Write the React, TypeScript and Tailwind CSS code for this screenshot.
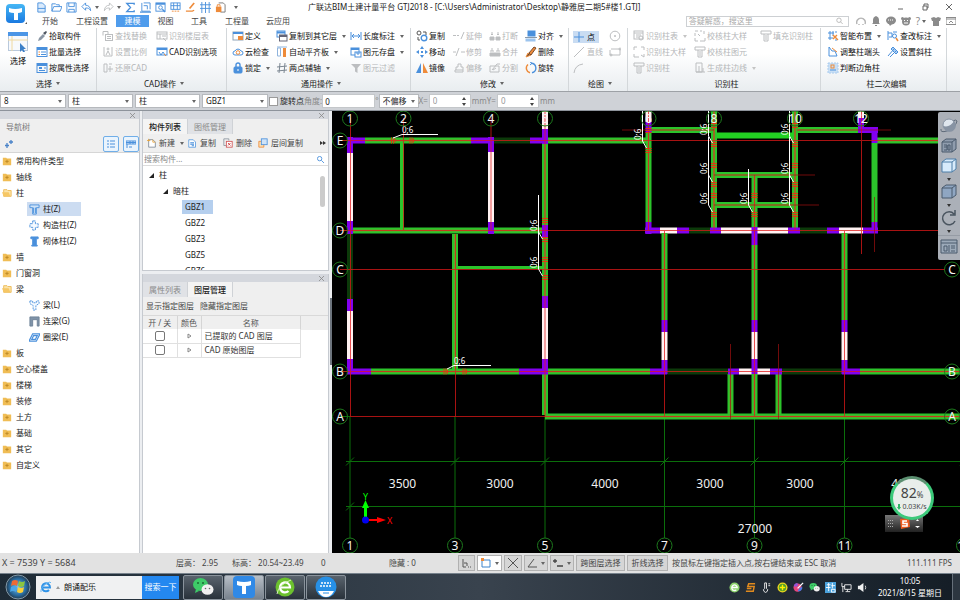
import { useState } from 'react';
import type { ReactNode } from 'react';

type Draw = (accent: string) => ReactNode;

// 12x12 glyphs. Main strokes use currentColor, the second colour is passed in.
const ICONS: Record<string, Draw> = {
  pick: () => <><path d="M2 11l1-3 4-4 2 2-4 4z" fill="#8b97a5" stroke="none" /><path d="M7 3l3-2 1 1-2 3z" fill="#4d5660" stroke="none" /></>,
  batch: a => <><rect x="1" y="1.5" width="10" height="9" /><path d="M1 3h10" strokeWidth="2" /><path d="M5 6h5M5 8.5h5" /><path d="M2.5 6h1.5M2.5 8.5h1.5" stroke={a} /></>,
  attr: () => <><rect x="1" y="1.5" width="10" height="9" /><path d="M1 3h10M3 6h3" strokeWidth="2" /><path d="M3 8.5h6M8 6h2" /></>,
  find: () => <><rect x="3.5" y="4.5" width="7" height="6" /><path d="M1 1.5h5v3M5 6.5h4M5 8.5h4M1 1.5v4" /></>,
  ratio: () => <><path d="M2 3v7h8V3M1 2h2M9 2h2M4 9l2-4 2 4" /><circle cx="6" cy="3" r="1" /></>,
  restore: () => <><path d="M2 2h3v8H2zM7 2h3M8 4v6M6 7h5" /></>,
  floor: () => <><rect x="1" y="2" width="10" height="7" /><path d="M1 4h10M4 4v5M6 6h4M7 8l3 3" /></>,
  cad: a => <><rect x="1" y="2" width="10" height="7" /><path d="M1 3h10" strokeWidth="2" /><path d="M3 6l2 3 2-3 2 3" /><path d="M8 8l2 2" stroke={a} /></>,
  define: a => <><rect x="1" y="2" width="10" height="8" stroke="#8fa3b8" /><path d="M1 3h10" strokeWidth="2" /><path d="M6 6h5v4H6z" fill={a} stroke="none" /></>,
  cloud: a => <><path d="M3 9h6a2 2 0 0 0 0-4 3.3 3.3 0 0 0-6 0 2 2 0 0 0 0 4z" /><circle cx="6" cy="6.5" r="1.8" stroke={a} /></>,
  lock: () => <><rect x="2" y="5" width="8" height="6" rx="1" fill="currentColor" /><path d="M4 5V3a2 2 0 0 1 4 0v2" strokeWidth="1.4" /><path d="M6 7v2" stroke="#fff" /></>,
  layers: () => <><rect x="1" y="1" width="8" height="6" /><path d="M1 2.5h8" strokeWidth="2" /><rect x="3.5" y="5" width="7.5" height="6" fill="#fff" stroke="#667" /><path d="M3.5 6h7.5" stroke="#667" strokeWidth="2" /></>,
  align: a => <><path d="M1.5 2h3v8h-3zM1 1h10" stroke="#8fb4dd" /><path d="M7 2h3v9H7z" fill={a} stroke="none" /></>,
  aux: () => <path d="M4 1L3 11M9 1L8 11M1 5l10-1M1 9l10-1" stroke="#7c8792" />,
  length: () => <path d="M1 2v8M11 2v8M2 6h8M4 4L2 6l2 2M8 4l2 2-2 2" />,
  save2: () => <><rect x="1" y="2" width="8" height="7" /><path d="M1 3h8" strokeWidth="2" /><rect x="5" y="6" width="6" height="5" fill="#fff" /><path d="M7 6v2h2V6" /></>,
  filter: () => <path d="M1 2h10L7.5 6v5L5 9.5V6z" fill="currentColor" stroke="none" />,
  copy: () => <><circle cx="3" cy="3" r="2" stroke="#555" /><circle cx="8" cy="8" r="2.8" strokeWidth="1.4" /><path d="M7 2h3v3M2 7v3h2" stroke="#555" /></>,
  move: () => <path d="M6 0l2 3H4zM6 12l2-3H4zM0 6l3-2v4zM12 6L9 4v4zM5 5h2v2H5z" fill="currentColor" stroke="none" />,
  mirror: a => <><path d="M5 1v10H0z" fill="currentColor" stroke="none" /><path d="M7 1v10h5z" fill={a} stroke="none" /></>,
  extend: () => <path d="M0 5.5h3M4 5.5h2M11 2L8 9" />,
  trim: () => <path d="M0 6h3M8 6h4M6 2L3 10" />,
  offset: () => <path d="M2 8h8v2H2zM3 8V5h2V2h3v3h2v3" />,
  brk: () => <><path d="M1 7h4v3H1zM7 7h4v3H7z" fill="currentColor" /><path d="M3 2v3M9 2v3M2 4l1 1 1-1M8 4l1 1 1-1" /></>,
  merge: () => <><path d="M1 7h10v3H1z" fill="currentColor" /><path d="M3 2v3M9 2v3M1 5h4M7 5h4" /></>,
  split: () => <path d="M1 4v6h9V4zM3 8l5-6M4 8l3-2M8 2h3" />,
  snap: () => <><rect x="3" y="1" width="7" height="5" fill="currentColor" /><path d="M0 7.5h12" stroke="#89a" /><rect x="1" y="9" width="9" height="2" fill="#9cc4ee" stroke="#9cc4ee" /></>,
  brush: a => <><path d="M1 11l2-4 3 2z" fill="#6b4a2f" stroke={a} /><path d="M4 7l5-6 2 1-5 7z" fill={a} stroke="#7a4c2c" /></>,
  rotate: a => <><path d="M3 2.5a4.8 4.8 0 0 0 2 8.3" stroke={a} strokeWidth="1.4" /><path d="M6 1.2a4.8 4.8 0 0 1 1 9.5" strokeWidth="1.4" /><path d="M5 0l2 1.3L5 3" /></>,
  point: () => <path d="M6 1v10M1 6h10" />,
  line: () => <path d="M1 11L11 1" />,
  arc: () => <path d="M1 11Q2 3 10 2" />,
  circle: () => <><circle cx="6" cy="6" r="4.8" /><path d="M5 6h2M6 5v2" /></>,
  rect: () => <><path d="M2 3h9v6H1V4" /><circle cx="2" cy="9" r="1" /><circle cx="11" cy="3" r="1" /></>,
  idTable: () => <><rect x="1" y="1" width="9" height="8" /><path d="M1 3h9M3 5h5M3 7h3" /><circle cx="8" cy="8" r="2" /></>,
  idBig: () => <path d="M1 4V1h3M8 1h3v3M11 8v3M1 8v3h5M8 9l3 2" />,
  idCol: () => <path d="M1 1h10v3H8v7H4V4H1zM4 4h4M6 5v5" />,
  check: () => <><path d="M1 1h3M6 1h2M10 1v3M1 3v3M1 8v3h3M6 11h5V8" /><path d="M4 4l2 2" /></>,
  edge: () => <path d="M2 1h6v9H2zM2 10h9M5 4v6M9 6v4" />,
  smart: a => <><path d="M1 3h6M1 8h5M3 1v9M6 1v5M9 1v2M9 9v2" /><path d="M6 5l5 5M10 5l-4 4" stroke={a} strokeWidth="1.4" /></>,
  adjust: a => <><path d="M2 1v9h8L8 5H5z" /><path d="M5 2l5 4" stroke={a} /></>,
  corner: a => <><rect x="1" y="1" width="10" height="10" fill="#c9dff5" stroke="#a9cbee" strokeDasharray="2 1" /><rect x="4" y="3" width="3" height="3" stroke={a} /><path d="M3 8h6" /></>,
  modify: a => <><path d="M1 1v9M1 3h4v4H2M6 2h4" /><circle cx="7.5" cy="6" r="2" /><path d="M9 8l2 3" stroke={a} strokeWidth="1.5" /></>,
  slope: () => <path d="M1 10l6-7M3 11l6-6M6 1l5 5-2 2-5-5z" fill="#a9cdf2" />,
  newFile: () => <><path d="M2 2h5l3 3v6H2z" fill="#fff" stroke="#7b8794" /><path d="M7 2v3h3M2 1v3M0 3h4" stroke="#e8a33a" /></>,
  copyDoc: () => <><path d="M1 1h6l3 3v7H1z" fill="#fff" /><path d="M3 5h5M3 7h5M5 9h3" strokeWidth="1.4" /></>,
  delDoc: () => <><path d="M1 1h6v2M1 1v8h3" stroke="#8a949e" /><rect x="4" y="4" width="7" height="7" fill="#fff" stroke="#d05050" /><path d="M6 6l3 3M9 6L6 9" stroke="#d03030" /></>,
  copyFloor: a => <><path d="M1 4h6v7H1z" stroke={a} fill="#fbe0b5" /><rect x="4" y="1" width="7" height="7" fill="#cfe3f8" /></>,
  folder: () => <><path d="M1 2h4l1 1h5v8H1z" fill="#f0bd55" stroke="none" /><path d="M6 4.5v4M4 6.5h4" stroke="#b98422" /></>,
  folderOpen: () => <><path d="M2 2h4l1 1h4v7H2z" fill="#fbe3a8" stroke="#eab64c" /><path d="M0 5h8l2 5H2z" fill="#f6c765" stroke="none" /></>,
  colZ: () => <path d="M1 1h10v3H8v7H4V4H1zM5 4v6M7 4v6" fill="#cfe3f8" />,
  colG: () => <path d="M4 1h3v3h3v4H7v3H4V8H1V4h3z" fill="#f5faff" strokeDasharray="3 1" />,
  colB: () => <path d="M2 1h8v2H8v7h1v1H3v-1h1V3H2z" fill="currentColor" />,
  beamL: () => <path d="M1 1h3v2h4V1h3v3L7.5 6v5h-3V6L1 4z" fill="#f5faff" strokeDasharray="2 1" />,
  beamG: () => <path d="M1 1h10v10H9V4H4v7H1z" fill="#7f93a8" stroke="#6e8297" />,
  beamE: () => <path d="M4 2h8L8 10H0zM5 4h4L7 8H3z" strokeWidth="1.3" />,
  open: () => <path d="M1 10V2h4l1 1h3v2M1 10l2-5h9l-2 5z" />,
  disk: () => <path d="M1 1h10v10H1zM3 1v4h6V1M3 11V8h6v3" />,
  file: () => <path d="M2 1h5l3 3v7H2zM2 7h8" fill="#d9eafc" />,
  undo: () => <path d="M5 1L1 5l4 4V6.500c3 0 4 .5 5.5 3C10.500 5.500 8 3.500 5 3.500z" />,
  redo: () => <path d="M7 1l4 4-4 4V6.500c-3 0-4 .5-5.500 3C1.500 5.500 4 3.500 7 3.500z" />,
  sigma: () => <path d="M10 3V1.500H2L6 6l-4 4.500h8V9" strokeWidth="1.5" />,
  measure: () => <><path d="M2 1v9h9M4 1h7v7M4 4h4v4" /><path d="M0 11h12" strokeWidth="1.4" /></>,
  search: () => <><rect x="1" y="1" width="10" height="9" /><path d="M1 2h10" strokeWidth="2" /><circle cx="6" cy="6" r="2" /><path d="M8 8l3 3" strokeWidth="1.5" /></>,
  calc: a => <><rect x="1" y="1" width="10" height="7" /><path d="M4 1v7M8 1v7M1 4h10" /><path d="M2 10h8" stroke={a} strokeDasharray="2 1" /></>,
  pen: a => <><path d="M5 7l5-6" strokeWidth="1.8" stroke={a} /><path d="M1 10h7l2-1" stroke={a} strokeWidth="1.4" /></>,
  grid: () => <path d="M2 0v12M6 0v12M10 0v12M0 3h12M0 7h12" />,
  lockDoc: a => <><path d="M4 1h5l2 2v8H6" stroke="#777" /><rect x="1" y="5" width="6" height="6" fill={a} stroke="none" /><path d="M2.5 5V3h3v2" stroke={a} /></>,
};

function Icon({ name, disabled, className = 'size-3' }: { name: string; disabled?: boolean; className?: string }) {
  const draw = ICONS[name];
  return (
    <svg viewBox="0 0 12 12" fill="none" stroke="currentColor" strokeWidth="1" className={`shrink-0 ${className} ${disabled ? 'text-[#bcbec0]' : 'text-[#4a90dc]'}`}>
      {draw(disabled ? '#bcbec0' : '#ee8b3a')}
    </svg>
  );
}

function Caret({ className = 'text-[#666]' }: { className?: string }) {
  return (
    <svg viewBox="0 0 4 3" className={`w-1 h-[3px] shrink-0 ${className}`} fill="currentColor">
      <path d="M0 0h4L2 3z" />
    </svg>
  );
}

interface Tool { icon: string; label: string; off?: boolean; caret?: boolean }
interface Column { width: string; tools: Tool[] }
interface Group { label: string; width: string; caret?: boolean; columns: Column[] }

const GROUPS: Group[] = [
  {
    label: 'CAD操作', width: 'w-[130px] pl-[5px]', caret: true,
    columns: [
      { width: 'w-[54px]', tools: [
        { icon: 'find', label: '查找替换', off: true },
        { icon: 'ratio', label: '设置比例', off: true },
        { icon: 'restore', label: '还原CAD', off: true },
      ] },
      { width: 'w-[70px]', tools: [
        { icon: 'floor', label: '识别楼层表', off: true },
        { icon: 'cad', label: 'CAD识别选项' },
      ] },
    ],
  },
  {
    label: '通用操作', width: 'w-[184px] pl-[5px]', caret: true,
    columns: [
      { width: 'w-[44px]', tools: [
        { icon: 'define', label: '定义' },
        { icon: 'cloud', label: '云检查' },
        { icon: 'lock', label: '锁定', caret: true },
      ] },
      { width: 'w-[74px]', tools: [
        { icon: 'layers', label: '复制到其它层', caret: true },
        { icon: 'align', label: '自动平齐板', caret: true },
        { icon: 'aux', label: '两点辅轴', caret: true },
      ] },
      { width: 'w-[60px]', tools: [
        { icon: 'length', label: '长度标注', caret: true },
        { icon: 'save2', label: '图元存盘', caret: true },
        { icon: 'filter', label: '图元过滤', off: true },
      ] },
    ],
  },
  {
    label: '修改', width: 'w-[158px] pl-[5px]', caret: true,
    columns: [
      { width: 'w-[37px]', tools: [
        { icon: 'copy', label: '复制' },
        { icon: 'move', label: '移动' },
        { icon: 'mirror', label: '镜像' },
      ] },
      { width: 'w-[36px]', tools: [
        { icon: 'extend', label: '延伸', off: true },
        { icon: 'trim', label: '修剪', off: true },
        { icon: 'offset', label: '偏移', off: true },
      ] },
      { width: 'w-[36px]', tools: [
        { icon: 'brk', label: '打断', off: true },
        { icon: 'merge', label: '合并', off: true },
        { icon: 'split', label: '分割', off: true },
      ] },
      { width: 'w-[42px]', tools: [
        { icon: 'snap', label: '对齐', caret: true },
        { icon: 'brush', label: '删除' },
        { icon: 'rotate', label: '旋转' },
      ] },
    ],
  },
];

const GROUPS_RIGHT: Group[] = [
  {
    label: '识别柱', width: 'w-[193px] pl-[5px]',
    columns: [
      { width: 'w-[61px]', tools: [
        { icon: 'idTable', label: '识别柱表', off: true, caret: true },
        { icon: 'idBig', label: '识别柱大样', off: true },
        { icon: 'idCol', label: '识别柱', off: true },
      ] },
      { width: 'w-[66px]', tools: [
        { icon: 'check', label: '校核柱大样', off: true },
        { icon: 'idCol', label: '校核柱图元', off: true },
        { icon: 'edge', label: '生成柱边线', off: true, caret: true },
      ] },
      { width: 'w-[56px]', tools: [{ icon: 'idCol', label: '填充识别柱', off: true }] },
    ],
  },
  {
    label: '柱二次编辑', width: 'w-[126px] pl-[6px]',
    columns: [
      { width: 'w-[60px]', tools: [
        { icon: 'smart', label: '智能布置', caret: true },
        { icon: 'adjust', label: '调整柱端头' },
        { icon: 'corner', label: '判断边角柱' },
      ] },
      { width: 'w-[56px]', tools: [
        { icon: 'modify', label: '查改标注', caret: true },
        { icon: 'slope', label: '设置斜柱' },
      ] },
    ],
  },
];

function ToolButton({ icon, label, off, caret }: Tool) {
  return (
    <button disabled={off} className={`flex h-4 items-center gap-px whitespace-nowrap text-left ${off ? 'text-[#b4b6b8]' : 'text-[#111]'}`}>
      <Icon name={icon} disabled={off} />
      <span>{label}</span>
      {caret && <span className="pl-1"><Caret className={off ? 'text-[#c4c4c4]' : 'text-[#666]'} /></span>}
    </button>
  );
}

function GroupShell({ label, width, caret, children }: { label: string; width: string; caret?: boolean; children: ReactNode }) {
  return (
    <section className={`flex shrink-0 flex-col border-r border-[#d3d7da] ${width}`}>
      <div className="flex h-12 items-start">{children}</div>
      <div className="flex h-4 items-center justify-center gap-1 text-[#222]">
        {label}
        {caret && <Caret />}
      </div>
    </section>
  );
}

function RibbonGroup({ group }: { group: Group }) {
  return (
    <GroupShell label={group.label} width={group.width} caret={group.caret}>
      {group.columns.map((col, i) => (
        <div key={i} className={`flex shrink-0 flex-col ${col.width}`}>
          {col.tools.map(tool => <ToolButton key={tool.label} {...tool} />)}
        </div>
      ))}
    </GroupShell>
  );
}

function Ribbon() {
  return (
    <div className="flex h-16 shrink-0 overflow-hidden border-b border-[#9da1a6] bg-linear-to-b from-white from-40% to-[#e9edf0]">
      <GroupShell label="选择" width="w-[97px]" caret>
        <button className="flex w-9 flex-col items-center gap-1 pt-1">
          <svg viewBox="0 0 20 20" className="size-5" fill="none">
            <rect x="0.5" y="0.5" width="19" height="18" fill="#f7f9fc" stroke="#b9c9dc" />
            <path d="M0 0h20v4H0z" fill="#4b95e6" />
            <path d="M4 4v15M0 8h20" stroke="#f0d9a0" />
            <path d="M12 11v9l2-2 1.5 3 1.5-1-1.5-3H18z" fill="#3d80c8" />
          </svg>
          <span>选择</span>
        </button>
        <div className="flex flex-col">
          <ToolButton icon="pick" label="拾取构件" />
          <ToolButton icon="batch" label="批量选择" />
          <ToolButton icon="attr" label="按属性选择" />
        </div>
      </GroupShell>
      {GROUPS.map(g => <RibbonGroup key={g.label} group={g} />)}
      <GroupShell label="绘图" width="w-[59px] pl-1" caret>
        <div className="flex w-9 flex-col">
          <button className="mt-[3px] flex h-3 w-[26px] items-center gap-[2px] bg-[#c9dcf2]">
            <Icon name="point" />点
          </button>
          <button disabled className="mt-px flex h-4 items-center gap-[2px] text-[#b4b6b8]"><Icon name="line" disabled />直线</button>
          <button disabled aria-label="弧" className="h-4"><Icon name="arc" disabled /></button>
        </div>
        <div className="flex flex-col">
          <button disabled aria-label="圆" className="flex h-4 items-center"><Icon name="circle" disabled /></button>
          <button disabled aria-label="矩形" className="flex h-4 items-center"><Icon name="rect" disabled /></button>
        </div>
      </GroupShell>
      {GROUPS_RIGHT.map(g => <RibbonGroup key={g.label} group={g} />)}
    </div>
  );
}

const MENUS = [
  { label: '开始', width: 'w-9' },
  { label: '工程设置', width: 'w-12' },
  { label: '建模', width: 'w-[33px]', active: true },
  { label: '视图', width: 'w-[33px]' },
  { label: '工具', width: 'w-[34px]' },
  { label: '工程量', width: 'w-[42px]' },
  { label: '云应用', width: 'w-10' },
];

const QUICK = ['file', 'open', 'disk', 'undo', 'redo', 'sigma', 'measure', 'search', 'calc', 'pen', 'grid', 'lockDoc'];

function Header() {
  return (
    <header className="flex h-7 shrink-0 bg-white">
      <div className="flex w-8 items-center pl-[5px]">
        <svg viewBox="0 0 22 22" className="size-[22px]">
          <defs>
            <linearGradient id="logo" x1="0" y1="0" x2="0" y2="1">
              <stop offset="0" stopColor="#45b7f5" />
              <stop offset="1" stopColor="#1a79e0" />
            </linearGradient>
          </defs>
          <rect x="1" y="1" width="19" height="19" rx="4" fill="url(#logo)" />
          <path d="M4 5q6 2 13 0v4q-2 1-4 1v7H9v-7q-3 0-5-1z" fill="#fff" />
          <path d="M22 19v2h-2z" fill="#555" />
        </svg>
      </div>
      <div className="flex min-w-0 flex-1 flex-col">
        <div className="flex h-[14px] items-center">
          <div className="flex w-[276px] items-center gap-1 pl-1">
            {QUICK.map(name => (
              <button key={name} aria-label={name} className="flex items-center gap-[3px]">
                <Icon name={name} disabled={name === 'redo'} className="size-[11px]" />
                {(name === 'undo' || name === 'redo') && <Caret />}
              </button>
            ))}
            <span className="pl-1"><Caret /></span>
          </div>
          <h1 className="flex-1 whitespace-nowrap text-[#222]">广联达BIM土建计量平台 GTJ2018 - [C:\Users\Administrator\Desktop\静雅居二期5#楼1.GTJ]</h1>
          <div className="flex gap-4 pr-[7px] text-[#666]">
            {['M1 6h5', 'M2 3h4v4H2zM3 3V1h4v4H6', 'M1 1l6 6M7 1L1 7'].map((d, i) => (
              <button key={d} aria-label={['最小化', '还原', '关闭'][i]}>
                <svg viewBox="0 0 8 8" className="size-2" fill="none" stroke="currentColor"><path d={d} /></svg>
              </button>
            ))}
          </div>
        </div>
        <nav className="flex h-[14px] items-center">
          {MENUS.map(m => (
            <a key={m.label} href="#" className={`flex h-3 items-center justify-center ${m.width} ${m.active ? 'bg-[#4f9cec] text-white' : 'text-[#444]'}`}>{m.label}</a>
          ))}
          <div className="ml-auto flex items-center gap-[7px] pr-1">
            <label className="flex h-[11px] w-[163px] items-center border border-[#cdd0d3]">
              <input aria-label="搜索" placeholder="答疑解惑，搜这里" className="w-full px-[2px] placeholder:text-[#aaa] outline-none" />
              <svg viewBox="0 0 10 10" className="mr-1 size-2" fill="none" stroke="#aaa"><circle cx="4" cy="4" r="3" /><path d="M6 6l3 3" /></svg>
            </label>
            <HeaderIcons />
          </div>
        </nav>
      </div>
    </header>
  );
}

function HeaderIcons() {
  const cls = 'size-[10px] shrink-0';
  return (
    <div className="flex items-center gap-[5px] text-[#8b8b8b]">
      <svg viewBox="0 0 10 10" className={cls} fill="none" stroke="#b5b5b5"><path d="M1 8a4.300 4.300 0 1 1 8 0M3 8v1M7 8v1" strokeWidth="1.4" /></svg>
      <svg viewBox="0 0 10 10" className={cls} fill="currentColor"><path d="M5 0q3 1 3 4v3l1 1H1l1-1V4q0-3 3-4zM4 9h2v1H4z" /></svg>
      <svg viewBox="0 0 10 10" className={cls} fill="currentColor"><ellipse cx="5" cy="4.5" rx="5" ry="4" /><path d="M3 8l1 2 2-2z" /><path d="M2 4h6" stroke="#fff" strokeDasharray="1 1" /></svg>
      <svg viewBox="0 0 10 10" className={cls} fill="currentColor"><circle cx="5" cy="5.5" r="4" /><circle cx="1.5" cy="2.5" r="1.5" /><circle cx="8.5" cy="2.5" r="1.5" /><path d="M3 4.500h1M6 4.500h1M3 7h4" stroke="#fff" /></svg>
      <span className="flex items-center gap-[2px] text-[10px]">?<Caret /></span>
      <svg viewBox="0 0 10 10" className={cls} fill="currentColor"><path d="M0 2l3-1 2 1 2-1 3 1-1 3H8v5H2V5H1z" /></svg>
      <svg viewBox="0 0 10 10" className={cls} fill="none" stroke="currentColor"><path d="M0 1.500h10v7H0zM0 3h10M3 7l2-2 2 2" /></svg>
    </div>
  );
}

function BarSelect({ value, label, width }: { value: string; label: string; width: string }) {
  return (
    <div className={`flex h-[14px] shrink-0 items-center border border-[#b6b9bd] bg-white pr-[3px] ${width}`}>
      <select aria-label={label} defaultValue={value} className="min-w-0 flex-1 appearance-none pl-[3px] outline-none">
        <option>{value}</option>
      </select>
      <Caret />
    </div>
  );
}

function Spin({ label }: { label: string }) {
  return (
    <div className="flex h-[14px] w-[42px] items-center border border-[#c4c7ca] bg-white pr-1">
      <input aria-label={label} defaultValue="0" disabled className="w-0 flex-1 pl-[3px] text-[#999]" />
      <svg viewBox="0 0 4 9" className="w-1 h-[9px]" fill="#444"><path d="M0 3l2-3 2 3zM0 6h4L2 9z" /></svg>
    </div>
  );
}

function OptionsBar() {
  return (
    <div className="flex h-[19px] shrink-0 items-center border-b border-[#8d939b] bg-[#cfd2d7] text-[#222]">
      <div className="flex gap-[2px]">
        <BarSelect label="楼层" value="8" width="w-[66px]" />
        <BarSelect label="类别" value="柱" width="w-[65px]" />
        <BarSelect label="构件类型" value="柱" width="w-[65px]" />
        <BarSelect label="构件" value="GBZ1" width="w-[66px]" />
      </div>
      <label className="flex items-center gap-[2px] pl-[1px]">
        <input type="checkbox" className="size-[9px] appearance-none border border-[#9b9b9b] bg-white" />
        旋转点
      </label>
      <label className="flex items-center text-[#888]">
        角度:
        <input defaultValue="0" className="h-[14px] w-[53px] border border-[#c4c7ca] bg-white pl-[2px] text-[#222]" />
        °
      </label>
      <BarSelect label="偏移" value="不偏移" width="w-[40px]" />
      <div className="flex items-center gap-px text-[#888]">
        X=<Spin label="X" />mmY=<Spin label="Y" />mm
      </div>
    </div>
  );
}

function PanelStrip() {
  return (
    <div className="flex h-2 shrink-0 items-center justify-end bg-[#d4d7dd] pr-1">
      <button aria-label="关闭面板">
        <svg viewBox="0 0 5 5" className="size-[5px]" stroke="#888" strokeWidth="0.8" fill="none"><path d="M0 0l5 5M5 0L0 5" /></svg>
      </button>
    </div>
  );
}

const NAV: { label: string; icon: string; child?: boolean; active?: boolean }[] = [
  { label: '常用构件类型', icon: 'folder' },
  { label: '轴线', icon: 'folder' },
  { label: '柱', icon: 'folderOpen' },
  { label: '柱(Z)', icon: 'colZ', child: true, active: true },
  { label: '构造柱(Z)', icon: 'colG', child: true },
  { label: '砌体柱(Z)', icon: 'colB', child: true },
  { label: '墙', icon: 'folder' },
  { label: '门窗洞', icon: 'folder' },
  { label: '梁', icon: 'folderOpen' },
  { label: '梁(L)', icon: 'beamL', child: true },
  { label: '连梁(G)', icon: 'beamG', child: true },
  { label: '圈梁(E)', icon: 'beamE', child: true },
  { label: '板', icon: 'folder' },
  { label: '空心楼盖', icon: 'folder' },
  { label: '楼梯', icon: 'folder' },
  { label: '装修', icon: 'folder' },
  { label: '土方', icon: 'folder' },
  { label: '基础', icon: 'folder' },
  { label: '其它', icon: 'folder' },
  { label: '自定义', icon: 'folder' },
];

function NavPanel() {
  return (
    <aside className="flex w-[140px] shrink-0 flex-col border-r border-[#c6cad0] bg-white">
      <PanelStrip />
      <div className="flex h-4 shrink-0 items-center bg-[#efefef] pl-[6px] text-[#777]">导航树</div>
      <div className="flex h-[18px] shrink-0 items-center justify-between border-b border-[#d6d6d6] bg-[#efefef] pl-1">
        <svg viewBox="0 0 10 10" className="size-[10px]" stroke="#4a83c8" fill="none"><path d="M3 4v5M1 6.500h4M7 1v4M5 3h4" strokeWidth="1.3" /></svg>
        <div className="flex gap-1">
          <button aria-label="列表" className="rounded-[2px] border border-[#70aee8] bg-[#eaf4fd] px-[2px] py-px">
            <svg viewBox="0 0 10 10" className="h-3 w-[10px]" fill="none" stroke="#4a90dc"><path d="M1 2h2M1 5h2M1 8h2M4 2h5M4 5h5M4 8h5" /></svg>
          </button>
          <button aria-label="图标" className="rounded-[2px] border border-[#70aee8] bg-[#eaf4fd] px-[2px] py-px">
            <svg viewBox="0 0 10 10" className="h-3 w-[10px]" fill="none" stroke="#4a90dc"><path d="M0 2h10v3H0zM0 3.500h10M1 5v4M4 2v3M7 2v3M3 8h3" /></svg>
          </button>
        </div>
      </div>
      <ul className="min-h-0 flex-1 overflow-hidden text-[#222]">
        {NAV.map(n => (
          <li key={n.label} className={n.child ? 'flex h-4 items-center pl-[27px]' : 'flex h-4 items-center pl-[2px]'}>
            <button className={`flex items-center ${n.child ? 'h-[14px] w-[54px] gap-[3px] pl-[2px]' : 'gap-1'} ${n.active ? 'bg-[#ccdcf1]' : ''}`}>
              <Icon name={n.icon} className={n.child ? 'size-[11px]' : 'size-[10px]'} />
              <span className="whitespace-nowrap">{n.label}</span>
            </button>
          </li>
        ))}
      </ul>
    </aside>
  );
}

function Tabs({ items, active }: { items: string[]; active: number }) {
  return (
    <div className="flex h-[15px] shrink-0 bg-[#efefef]">
      {items.map((t, i) => (
        <button key={t} className={`border-r border-[#cfd2d6] px-[6px] ${i === active ? 'bg-[#f4f4f4] font-medium text-[#222]' : 'bg-[#e0e2e6] text-[#8a8a8a]'}`}>{t}</button>
      ))}
    </div>
  );
}

function ComponentPanels() {
  const [selected, setSelected] = useState(0);
  return (
    <div className="flex w-[187px] shrink-0 flex-col gap-[3px]">
      <section className="flex h-[160px] shrink-0 flex-col border-x border-b border-[#c6cad0] bg-white">
        <PanelStrip />
        <Tabs items={['构件列表', '图纸管理']} active={0} />
        <div className="flex h-[18px] shrink-0 items-center bg-[#efefef] pl-1 text-[#444]">
          <button className="flex w-[41px] items-center gap-[2px]"><Icon name="newFile" className="size-[10px]" />新建<span className="pl-[3px]"><Caret /></span></button>
          <button className="flex w-[35px] items-center gap-[3px]"><Icon name="copyDoc" className="size-[9px]" />复制</button>
          <button className="flex w-[35px] items-center gap-[3px]"><Icon name="delDoc" className="size-[10px]" />删除</button>
          <button className="flex items-center gap-[3px]"><Icon name="copyFloor" className="size-[10px]" />层间复制</button>
          <svg viewBox="0 0 6 4" className="ml-auto mr-[2px] h-1 w-[6px]" fill="#333"><path d="M0 0l3 2-3 2zM3 0l3 2-3 2z" /></svg>
        </div>
        <label className="flex h-[14px] shrink-0 items-center border-y border-[#dcdcdc]">
          <input placeholder="搜索构件..." aria-label="搜索构件" className="w-0 flex-1 px-px outline-none placeholder:text-[#888]" />
          <svg viewBox="0 0 8 8" className="mr-1 size-[7px]" fill="none" stroke="#4a90dc"><circle cx="3" cy="3" r="2.5" /><path d="M5 5l3 3" /></svg>
        </label>
        <div className="flex min-h-0 flex-1">
          <ul className="min-w-0 flex-1 overflow-hidden pt-[1px] text-[#222]">
            <li className="flex h-4 items-center gap-[5px] pl-[6px]"><Expand />柱</li>
            <li className="flex h-4 items-center gap-[5px] pl-5"><Expand />暗柱</li>
            {['GBZ1', 'GBZ2', 'GBZ3', 'GBZ5', 'GBZ6'].map((g, i) => (
              <li key={g} className="flex h-4 items-center pl-[39px]">
                <button onClick={() => setSelected(i)} className={`h-[14px] w-[31px] pl-[3px] text-left ${selected === i ? 'bg-[#b5cfee]' : ''}`}>{g}</button>
              </li>
            ))}
          </ul>
          <div className="w-2 pt-[10px]"><div className="h-[31px] w-[5px] rounded-full bg-[#cbcbcb]" /></div>
        </div>
      </section>
      <section className="flex min-h-0 flex-1 flex-col border-x border-[#c6cad0] bg-white">
        <PanelStrip />
        <Tabs items={['属性列表', '图层管理']} active={1} />
        <div className="flex h-[18px] shrink-0 items-center gap-[6px] bg-[#efefef] pl-[3px] text-[#444]">
          <button>显示指定图层</button>
          <button>隐藏指定图层</button>
        </div>
        <div className="border-t border-[#d9d9d9] bg-linear-to-b from-[#efefef] from-[14px] to-white to-[14px]">
          <table className="w-[158px] table-fixed border-collapse bg-white text-[#333]">
            <thead>
              <tr className="h-[13px] bg-[#efefef] text-[#555]">
                <th className="w-[34px] border-r border-[#d5d5d5] font-normal">开 / 关</th>
                <th className="w-6 border-r border-[#d5d5d5] font-normal">颜色</th>
                <th className="border-r border-[#d5d5d5] font-normal">名称</th>
              </tr>
            </thead>
            <tbody>
              {['已提取的 CAD 图层', 'CAD 原始图层'].map(name => (
                <tr key={name} className="h-[14px] border-b border-[#e0e0e0]">
                  <td className="border-r border-[#e0e0e0]">
                    <input type="checkbox" aria-label={name} className="mx-auto block size-[10px] appearance-none rounded-[2px] border border-[#777]" />
                  </td>
                  <td className="border-r border-[#e0e0e0]">
                    <svg viewBox="0 0 5 6" className="mx-auto h-[6px] w-[5px]" fill="none" stroke="#888"><path d="M1 1l3 2-3 2z" /></svg>
                  </td>
                  <td className="whitespace-nowrap border-r border-[#e0e0e0] pl-[3px]">{name}</td>
                </tr>
              ))}
            </tbody>
          </table>
        </div>
      </section>
    </div>
  );
}

function Expand() {
  return <svg viewBox="0 0 5 5" className="size-[5px]" fill="#222"><path d="M5 0v5H0z" /></svg>;
}

// ─── Floor plan ───────────────────────────────────────────────────────────────
type Seg = [number, number, number]; // start, end, fixed coordinate

const GREEN = '#2bc42b';
const PURPLE = '#8300f0';
const WHITE = '#fff2f2';
const DARK = '#0c3a0a';

const H_WALLS: [string, Seg[]][] = [
  [GREEN, [[365, 471, 140.5], [548, 646, 140.5], [877, 960, 140.5], [353, 545, 230.5], [371, 519, 371.5], [548, 650, 371.5], [860, 960, 371.5], [545, 960, 416.5], [651, 712, 130], [797, 860, 130], [717, 793, 175], [717, 793, 205]]],
  [DARK, [[494, 530, 140.5], [689, 710, 230.5], [800, 827, 230.5], [667, 728, 371.5], [782, 842, 371.5]]],
  [WHITE, [[660, 677, 230.5], [721, 788, 230.5], [839, 863, 230.5], [739, 770, 371.5]]],
  [PURPLE, [[347, 365, 140.5], [471, 494, 140.5], [530, 548, 140.5], [645, 660, 230.5], [677, 689, 230.5], [710, 721, 230.5], [788, 800, 230.5], [827, 839, 230.5], [863, 878, 230.5], [347, 371, 371.5], [519, 548, 371.5], [650, 667, 371.5], [728, 739, 371.5], [770, 782, 371.5], [842, 860, 371.5], [859, 878, 130]]],
];

const V_WALLS: [string, Seg[]][] = [
  [GREEN, [[234, 369, 455], [144, 225, 545], [237, 296, 545], [374, 415, 545], [133, 222, 648.5], [111, 228, 714], [175, 227, 754.5], [245, 320, 754.5], [374, 414, 754.5], [111, 228, 795], [233, 320, 664.5], [233, 320, 844.5], [374, 414, 730.5], [374, 414, 778.5], [143, 222, 874.5]]],
  [DARK, [[233, 299, 350]]],
  [WHITE, [[153, 221, 350], [311, 359, 350], [152, 222, 491], [111, 129, 545], [308, 359, 545], [111, 122, 648.5], [332, 359, 754.5], [332, 360, 664.5], [332, 360, 844.5], [111, 118, 861]]],
  [PURPLE, [[137, 153, 350], [221, 234, 350], [299, 311, 350], [359, 374, 350], [137, 152, 491], [222, 234, 491], [129, 144, 545], [225, 237, 545], [296, 308, 545], [359, 374, 545], [122, 133, 648.5], [222, 234, 648.5], [227, 245, 754.5], [320, 332, 754.5], [359, 374, 754.5], [320, 332, 664.5], [360, 374, 664.5], [320, 332, 844.5], [360, 374, 844.5], [118, 133, 861], [127, 143, 874.5], [222, 233, 874.5]]],
];

const RED_H: Seg[] = [[340, 960, 140.5], [340, 960, 230.5], [340, 945, 269.5], [340, 960, 371.5], [350, 960, 416.5]];
const RED_V: Seg[] = [[118, 416, 350.5], [118, 230, 403.5], [234, 416, 455.5], [118, 230, 491], [111, 416, 545], [111, 230, 648.5], [230, 416, 664.5], [111, 230, 714], [175, 416, 754.5], [111, 230, 795], [230, 416, 844.5], [111, 254, 861.5]];
const FAINT_H: Seg[] = [[622, 714, 130], [797, 891, 130], [714, 815, 175], [714, 819, 205]];
const FAINT_V: Seg[] = [[197, 252, 874.5], [344, 419, 730.5], [344, 419, 778.5]];

const MARKS: [number, number][] = [
  [545, 220], [545, 239], [545, 259], [545, 277], [648.5, 130], [648.5, 150],
  [714, 125], [714, 144], [714, 165], [714, 184], [714, 195], [714, 214],
  [795, 125], [795, 144], [795, 165], [795, 184], [795, 195], [795, 214],
  [754.5, 195], [754.5, 214],
];

const BOTTOM_AXES: [string, number][] = [['1', 350], ['3', 455], ['5', 545], ['7', 664.5], ['9', 754.5], ['11', 844.5], ['13', 964]];
const TOP_AXES: [string, number][] = [['1', 350], ['2', 403.5], ['4', 491], ['5', 545], ['6', 648.5], ['8', 714], ['10', 795], ['12', 861]];
const LEFT_AXES: [string, number][] = [['E', 140.5], ['D', 230.5], ['C', 269.5], ['B', 371.5], ['A', 416.5]];
const DIMS: [string, number, number][] = [['3500', 402.5, 488], ['3000', 500, 488], ['4000', 605, 488], ['3000', 710, 488], ['3000', 800, 488], ['4000', 905, 488], ['27000', 755, 533]];
// leader notes: line x, line top, line bottom
const NOTES: [number, number, number][] = [
  [538.5, 195, 232], [538.5, 230, 269], [642.5, 111, 141],
  [708.5, 111, 136], [708.5, 137, 175], [708.5, 175, 205],
  [748.5, 169, 205], [789.5, 111, 136], [789.5, 137, 175], [789.5, 175, 205],
];

function Bubble({ x, y, label }: { x: number; y: number; label: string }) {
  return (
    <g>
      <circle cx={x} cy={y} r="7.5" fill="none" stroke="#1d7a1d" strokeWidth="1" />
      <text x={x} y={y + 4.5} textAnchor="middle" fontSize="12" fill="#f4f4f4">{label}</text>
    </g>
  );
}

function Plan() {
  return (
    <svg viewBox="332 111 628 442" preserveAspectRatio="xMinYMin slice" className="block size-full bg-black">
      <g stroke="#0b6e0b" strokeWidth="1">
        {BOTTOM_AXES.map(([l, x]) => <path key={l} d={`M${x} 416V538M${x - 4} 465.5l8 -8`} />)}
        <path d="M346 461.5H960M346 506.5H960M346 510.5l8 -8" />
        <path d="M340 140.5H350M340 230.5H350M340 371.5H350M340 416.5H350" />
      </g>
      {H_WALLS.slice(0, 3).map(([color, segs]) => segs.map(([a, b, y]) => <path key={`${a}h${y}`} d={`M${a} ${y}H${b}`} stroke={color} strokeWidth="6" />))}
      {V_WALLS.slice(0, 3).map(([color, segs]) => segs.map(([a, b, x]) => <path key={`${a}v${x}`} d={`M${x} ${a}V${b}`} stroke={color} strokeWidth="6" />))}
      {/* lighter core along the green walls */}
      {H_WALLS[0][1].map(([a, b, y]) => <path key={`${a}c${y}`} d={`M${a} ${y}H${b}`} stroke="#6f9e2c" strokeWidth="2" />)}
      {V_WALLS[0][1].slice(0, -1).map(([a, b, x]) => <path key={`${a}d${x}`} d={`M${x} ${a}V${b}`} stroke="#6f9e2c" strokeWidth="2" />)}
      <path d="M717 135.5H793" stroke="#22d022" strokeWidth="6" />
      <path d="M402 143V228" stroke={GREEN} strokeWidth="4" />
      <path d="M458 267.5H542" stroke={GREEN} strokeWidth="3" />
      {H_WALLS[3][1].map(([a, b, y]) => <path key={`${a}p${y}`} d={`M${a} ${y}H${b}`} stroke={PURPLE} strokeWidth="6" />)}
      {V_WALLS[3][1].map(([a, b, x]) => <path key={`${a}q${x}`} d={`M${x} ${a}V${b}`} stroke={PURPLE} strokeWidth="6" />)}
      <g stroke="#e01818" strokeWidth="1" opacity="0.75">
        {RED_H.map(([a, b, y]) => <path key={y} d={`M${a} ${y}H${b}`} />)}
        {RED_V.map(([a, b, x]) => <path key={x} d={`M${x} ${a}V${b}`} />)}
      </g>
      <g stroke="#a01010" strokeWidth="1" opacity="0.7">
        {FAINT_H.map(([a, b, y]) => <path key={`${a}-${y}`} d={`M${a} ${y}H${b}`} />)}
        {FAINT_V.map(([a, b, x]) => <path key={x} d={`M${x} ${a}V${b}`} />)}
      </g>
      <g stroke="#e03a10" strokeWidth="1">
        {MARKS.map(([x, y]) => <path key={`${x}-${y}`} d={`M${x - 3} ${y - 1.5}h6M${x - 3} ${y + 0.5}h6M${x - 3} ${y + 2.5}h6`} />)}
        {[[393, 140.5], [411.5, 140.5], [445.5, 371.5], [464.5, 371.5]].map(([x, y]) => (
          <path key={x} d={`M${x - 1.5} ${y - 3}v6M${x + 0.5} ${y - 3}v6M${x + 2} ${y - 2}v4`} />
        ))}
      </g>
      <g stroke="#fff" fill="none" strokeWidth="1">
        <path d="M393 138l9-3.5H438M447 369l7-3.5H491" />
        {NOTES.map(([x, a, b]) => <path key={`${x}-${a}`} d={`M${x} ${a}V${b}l4 7`} />)}
      </g>
      <g fill="#fff" fontSize="8">
        <text x="402" y="133">0;6</text>
        <text x="454" y="364">0;6</text>
        {NOTES.map(([x, a, b]) => <text key={`${x}-${a}`} transform={`translate(${x - 2} ${b - 1}) rotate(-90)`}>0;6</text>)}
      </g>
      {TOP_AXES.map(([l, x]) => <Bubble key={l} x={x} y={118.5} label={l} />)}
      {BOTTOM_AXES.map(([l, x]) => <Bubble key={l} x={x} y={545.5} label={l} />)}
      {LEFT_AXES.map(([l, y]) => <Bubble key={l} x={340} y={y} label={l} />)}
      {LEFT_AXES.slice(2).map(([l, y]) => <Bubble key={l} x={952} y={y} label={l} />)}
      <g fill="#f0f0f0" fontSize="12" textAnchor="middle">
        {DIMS.map(([t, x, y]) => <text key={x} x={x} y={y}>{t}</text>)}
      </g>
      {/* coordinate origin */}
      <path d="M365.5 519V506" stroke="#0f0" strokeWidth="3" />
      <path d="M362 508l3.5-8 3.5 8z" fill="#0f0" />
      <path d="M368 520H378" stroke="#f00" strokeWidth="2" />
      <path d="M377 517l9 3-9 3z" fill="#f00" />
      <circle cx="365.5" cy="520" r="3.5" fill="#0000f0" />
      <text x="365.5" y="500" fontSize="9" fill="#0f0" textAnchor="middle">Y</text>
      <text x="387" y="523.5" fontSize="9" fill="#f00">X</text>
    </svg>
  );
}

function ViewTools() {
  const cube = 'M2 5h10v10H2zM2 5l4-3h10v10l-4 3M12 5l4-3';
  const btn = 'size-[18px]';
  return (
    <div className="absolute right-0 top-px flex w-[22px] flex-col items-center gap-[2px] rounded-l-[2px] bg-[#abb0b8] pb-1 pt-[5px]">
      <button aria-label="动态观察"><svg viewBox="0 0 18 18" className={btn} fill="none" stroke="#5f6b7a"><path d="M1 12q-1 4 6 2 9-4 10-10-1-2-4 0" /><circle cx="9" cy="8" r="6" fill="#dfe6ee" stroke="#8793a3" /><path d="M3 9q7 2 11-5a6 6 0 0 1-9 9z" fill="#8793a3" stroke="none" /></svg></button>
      <button aria-label="三维"><svg viewBox="0 0 18 18" className={btn} fill="#8f9cad" stroke="#4a5a6c"><path d={cube} /><path d="M4 8h3v5H4M4 10h3M8 8h2v5H8z" fill="none" /></svg></button>
      <button aria-label="俯视" className="flex flex-col items-center gap-[3px]"><svg viewBox="0 0 18 18" className={btn} fill="#d8ebfb" stroke="#4f7fa8"><path d={cube} /></svg><Caret className="text-[#333]" /></button>
      <button aria-label="实体" className="flex flex-col items-center gap-[3px]"><svg viewBox="0 0 18 18" className={btn} fill="#8fa6c2" stroke="#4a5a6c"><path d={cube} /></svg><Caret className="text-[#333]" /></button>
      <button aria-label="旋转" className="flex flex-col items-center gap-[3px]"><svg viewBox="0 0 18 18" className={btn} fill="none" stroke="#4a5560" strokeWidth="1.5"><path d="M14 5a6.500 6.500 0 1 0 1 7M15 1v5h-5" /></svg><Caret className="text-[#333]" /></button>
      <span className="h-px w-full bg-[#969ca5]" />
      <button aria-label="显示设置"><svg viewBox="0 0 18 18" className={btn} fill="#9caab9" stroke="#4a5a6c"><path d="M1 2h16v13H1zM1 5h16M4 8h3v5H4zM9 7v7M11 8h4M11 10h4M11 13h4" /></svg></button>
    </div>
  );
}

function Viewport() {
  return (
    <main className="relative min-w-0 flex-1 overflow-hidden bg-black">
      <Plan />
      <ViewTools />
      <div className="absolute bottom-[21px] right-[37px] flex h-[17px] w-[38px] items-center justify-between bg-linear-to-b from-[#777] to-[#222] px-[3px]">
        <svg viewBox="0 0 6 8" className="h-2 w-[6px]" fill="#aaa"><path d="M0 0h1v1H0zM2 0h1v1H2zM4 0h1v1H4zM0 3h1v1H0zM2 3h1v1H2zM4 3h1v1H4zM0 6h1v1H0zM2 6h1v1H2zM4 6h1v1H4z" /></svg>
        <svg viewBox="0 0 11 11" className="size-[11px]"><path d="M1 1l9-1 1 9-9 2z" fill="#ee5a1e" /><path d="M8 3H4v2.500h4V8H3" fill="none" stroke="#fff" strokeWidth="1.6" /></svg>
        <svg viewBox="0 0 5 9" className="h-[9px] w-[5px]" fill="#fff"><path d="M1 2l1.500-2L4 2zM0 7h5L2.500 9z" /></svg>
      </div>
      <div className="absolute bottom-[33px] right-[26px] flex size-11 flex-col items-center justify-center rounded-full border-[3px] border-[#3cc97a] border-t-[#5b8f70] bg-[#e9eeeb] text-[#444]">
        <span className="text-[14px] leading-4">82<span className="text-[8px]">%</span></span>
        <span className="flex items-center gap-px text-[7px] leading-[8px]">
          <svg viewBox="0 0 4 6" className="h-[6px] w-1" fill="#2fb565"><path d="M1 0h2v3h1L2 6 0 3h1z" /></svg>
          0.03K/s
        </span>
      </div>
    </main>
  );
}

function StatusBar() {
  const btn = 'flex h-4 items-center justify-center gap-1 border border-[#b1b1b1] bg-[#d6d6d6]';
  return (
    <footer className="flex h-5 shrink-0 items-center whitespace-nowrap bg-[#e2e2e2] pl-[2px] text-[#444]">
      <span className="w-[174px] text-[9px]">X = 7539 Y = 5684</span>
      <span className="w-[56px]">层高： 2.95</span>
      <span className="w-[89px]">标高： 20.54~23.49</span>
      <span className="w-[68px]">0</span>
      <span className="w-[69px]">隐藏 : 0</span>
      <div className="flex items-center gap-[2px]">
        <button aria-label="正交" className={`${btn} w-[17px]`}><svg viewBox="0 0 10 10" className="size-[10px]" fill="none" stroke="#555"><path d="M1 1v8h3M2 5h3v3M6 9h1M8 9h1" /></svg></button>
        <button aria-label="捕捉" className={`${btn} w-[25px] border-[#5ea2e0] bg-white`}><svg viewBox="0 0 10 10" className="size-[10px]" fill="none" stroke="#3c84cc"><path d="M1 2h8v7H1z" /><path d="M0 0h3v3H0z" fill="#ee8b3a" stroke="none" /></svg><Caret /></button>
        <button aria-label="交点" className={`${btn} w-[18px]`}><svg viewBox="0 0 10 10" className="size-[10px]" stroke="#555"><path d="M0 0l10 10M10 0L0 10" /></svg></button>
        <button aria-label="角度" className={`${btn} w-6`}><svg viewBox="0 0 10 10" className="size-[10px]" fill="none" stroke="#555"><path d="M7 1L1 9h9" /></svg><Caret /></button>
        <button aria-label="增量" className={`${btn} w-6`}><svg viewBox="0 0 10 10" className="size-[10px]" stroke="#444"><path d="M0 3h4M2 1v4M4 8h6" strokeWidth="1.3" /></svg><Caret /></button>
        <button className={`${btn} w-[49px]`}>跨图层选择</button>
        <button className={`${btn} w-[41px]`}>折线选择</button>
      </div>
      <span className="pl-1">按鼠标左键指定插入点,按右键结束或 ESC 取消</span>
      <span className="ml-auto pr-2">111.111 FPS</span>
    </footer>
  );
}

function TaskButton({ label, active, children }: { label: string; active?: boolean; children: ReactNode }) {
  return (
    <button aria-label={label} className={`flex h-[25px] w-10 items-center justify-center rounded-[2px] border border-[#8a939c] ${active ? 'bg-linear-to-b from-[#b8bfc7] to-[#78828d]' : 'bg-linear-to-b from-[#5a646e] to-[#29323b]'}`}>
      {children}
    </button>
  );
}

function TrayIcons() {
  const cls = 'size-[11px]';
  return (
    <div className="flex items-center gap-[5px]">
      <svg viewBox="0 0 12 12" className={cls}><circle cx="6" cy="6" r="5.5" fill="#8ed46e" /><path d="M3 6h6a3 3 0 1 0-1 2.500" fill="none" stroke="#fff" strokeWidth="1.4" /></svg>
      <svg viewBox="0 0 12 12" className={cls} fill="none" stroke="#e08a1e" strokeWidth="1.6"><path d="M11 2H4L3 5h7L9 10H1M2 7h5" /></svg>
      <svg viewBox="0 0 12 12" className={cls} fill="none" stroke="#eee"><path d="M4 1h2v6a2.200 2.200 0 1 1-2 0zM8 2h2M8 4h2" /></svg>
      <svg viewBox="0 0 12 12" className={cls}><circle cx="6" cy="6" r="5.5" fill="#f0d91c" /><circle cx="6" cy="6" r="4" fill="#4f9d2c" /><path d="M6 3v6M3 6h6" stroke="#fff200" strokeWidth="1.6" /></svg>
      <svg viewBox="0 0 12 12" className={cls}><circle cx="5" cy="6" r="4.5" fill="#e8457b" /><path d="M5 10a4 4 0 0 0 5-5L7 7z" fill="#4b7be8" /><path d="M5 7l6-6" stroke="#fff" strokeWidth="1.4" /><path d="M1 5a4 4 0 0 1 4-4v4z" fill="#9156d8" /></svg>
      <WeChat className={cls} />
      <svg viewBox="0 0 12 12" className={cls}><path d="M0 0h12v12H0z" fill="#4ba2dc" /><path d="M2 3h4M4 1v9M1 6h5M8 1v6M7 4h4M7 8h4v3H7z" fill="none" stroke="#fff" /></svg>
      <svg viewBox="0 0 12 12" className={cls} fill="none" stroke="#eee"><path d="M4 3h7v5H4zM1 1v4h3M7 8v2M5 10.500h5M2 5v6" /></svg>
      <svg viewBox="0 0 12 12" className={cls}><path d="M1 4h2l4-3v10L3 8H1z" fill="#f2f2f2" /><path d="M9 4q1 2 0 4" fill="none" stroke="#ddd" /></svg>
    </div>
  );
}

function WeChat({ className }: { className: string }) {
  return (
    <svg viewBox="0 0 22 20" className={className}>
      <ellipse cx="8.5" cy="7.5" rx="7.5" ry="6.5" fill="#3ecb68" />
      <path d="M4 12l-1 4 4-2z" fill="#3ecb68" />
      <circle cx="6" cy="6" r="1" fill="#1b6b33" /><circle cx="11" cy="6" r="1" fill="#1b6b33" />
      <ellipse cx="15.5" cy="12.5" rx="6" ry="5.3" fill="#f0f0f0" />
      <circle cx="13.5" cy="11.5" r="0.8" fill="#666" /><circle cx="17.5" cy="11.5" r="0.8" fill="#666" />
    </svg>
  );
}

function TaskBar() {
  return (
    <div className="flex h-[27px] shrink-0 items-center border-t border-[#77828c] bg-linear-to-r from-[#1e2b36] via-[#39434e] via-50% to-[#141d26] text-white">
      <button aria-label="开始菜单" className="pl-[5px] pr-[5px]">
        <svg viewBox="0 0 26 26" className="size-[26px]">
          <defs><radialGradient id="orb"><stop offset="0" stopColor="#7fc3ec" /><stop offset="0.7" stopColor="#27689b" /><stop offset="1" stopColor="#23394c" /></radialGradient></defs>
          <circle cx="13" cy="13" r="12" fill="url(#orb)" stroke="#8299a8" />
          <path d="M7 7q3-2 6 0l-1 5q-3-2-6 0z" fill="#ee6a33" />
          <path d="M14 7q3 2 6 0l-1 5q-3 2-6 0z" fill="#8cc640" />
          <path d="M6 13q3-2 6 0l-1 5q-3-2-6 0z" fill="#4ba6e8" />
          <path d="M13 13q3 2 6 0l-1 5q-3 2-6 0z" fill="#fcd034" />
        </svg>
      </button>
      <form className="flex h-[23px]" onSubmit={e => e.preventDefault()}>
        <label className="flex w-[106px] items-center gap-1 bg-[#f0f1f2] pl-1">
          <svg viewBox="0 0 12 12" className="size-3 shrink-0" fill="none"><path d="M2.500 6.500h7.500a4 4 0 1 0-1 2.500" stroke="#2f93e8" strokeWidth="2" /><path d="M1 11Q0 7 7 2q4-2 4 0" stroke="#6cb8f2" /></svg>
          <svg viewBox="0 0 4 3" className="h-[3px] w-1" fill="#999"><path d="M0 3h4L2 0z" /></svg>
          <input aria-label="搜索" defaultValue="朗诵配乐" className="w-0 flex-1 text-[#111] outline-none" />
        </label>
        <button className="w-[37px] bg-[#2488f0]">搜索一下</button>
      </form>
      <div className="flex gap-px pl-1">
        <TaskButton label="微信"><WeChat className="h-5 w-[22px]" /></TaskButton>
        <TaskButton label="GTJ" active><svg viewBox="0 0 22 22" className="size-[22px]"><rect width="22" height="22" rx="4" fill="#3089e6" /><path d="M4 5q7 2 14 0v4q-2 1-5 1v8H9v-8q-3 0-5-1z" fill="#fff" /></svg></TaskButton>
        <TaskButton label="浏览器"><svg viewBox="0 0 20 20" className="size-5" fill="none"><circle cx="10" cy="10" r="9.5" fill="#6cc12e" /><path d="M5 10.500h10a5 5 0 1 0-1.500 3.500" stroke="#fff" strokeWidth="2.2" /><path d="M2 17Q3 8 16 3" stroke="#d9f3c0" /></svg></TaskButton>
        <TaskButton label="助手"><svg viewBox="0 0 22 22" className="size-[22px]"><circle cx="11" cy="11" r="10.5" fill="#2790e6" /><path d="M6 7h10M5 10h12" stroke="#fff" strokeWidth="1.5" strokeDasharray="2 1" /><path d="M3 15h16q-3 6-8 6t-8-6z" fill="#fff" /><path d="M8 17h6" stroke="#2790e6" /></svg></TaskButton>
      </div>
      <div className="ml-auto flex items-center">
        <TrayIcons />
        <div className="flex w-[84px] flex-col items-center leading-3">
          <span>10:05</span>
          <span className="whitespace-nowrap">2021/8/15 星期日</span>
        </div>
        <button aria-label="显示桌面" className="h-[26px] w-2 border-l border-[#66707a] bg-[#2c3640]" />
      </div>
    </div>
  );
}

export default function App() {
  return (
    <div className="flex h-screen flex-col overflow-hidden bg-[#eceef1] font-['Noto_Sans','Noto_Sans_CJK_SC',sans-serif] text-[8px] leading-[10px]">
      <Header />
      <Ribbon />
      <OptionsBar />
      <div className="flex min-h-0 flex-1">
        <NavPanel />
        <div className="flex shrink-0 pl-[2px]"><ComponentPanels /></div>
        <div className="flex w-[3px] shrink-0 items-center bg-[#eceef1]">
          <div className="mb-[2px] ml-px h-[67px] w-[2px] bg-[#6d757e]" />
        </div>
        <Viewport />
      </div>
      <StatusBar />
      <TaskBar />
    </div>
  );
}
